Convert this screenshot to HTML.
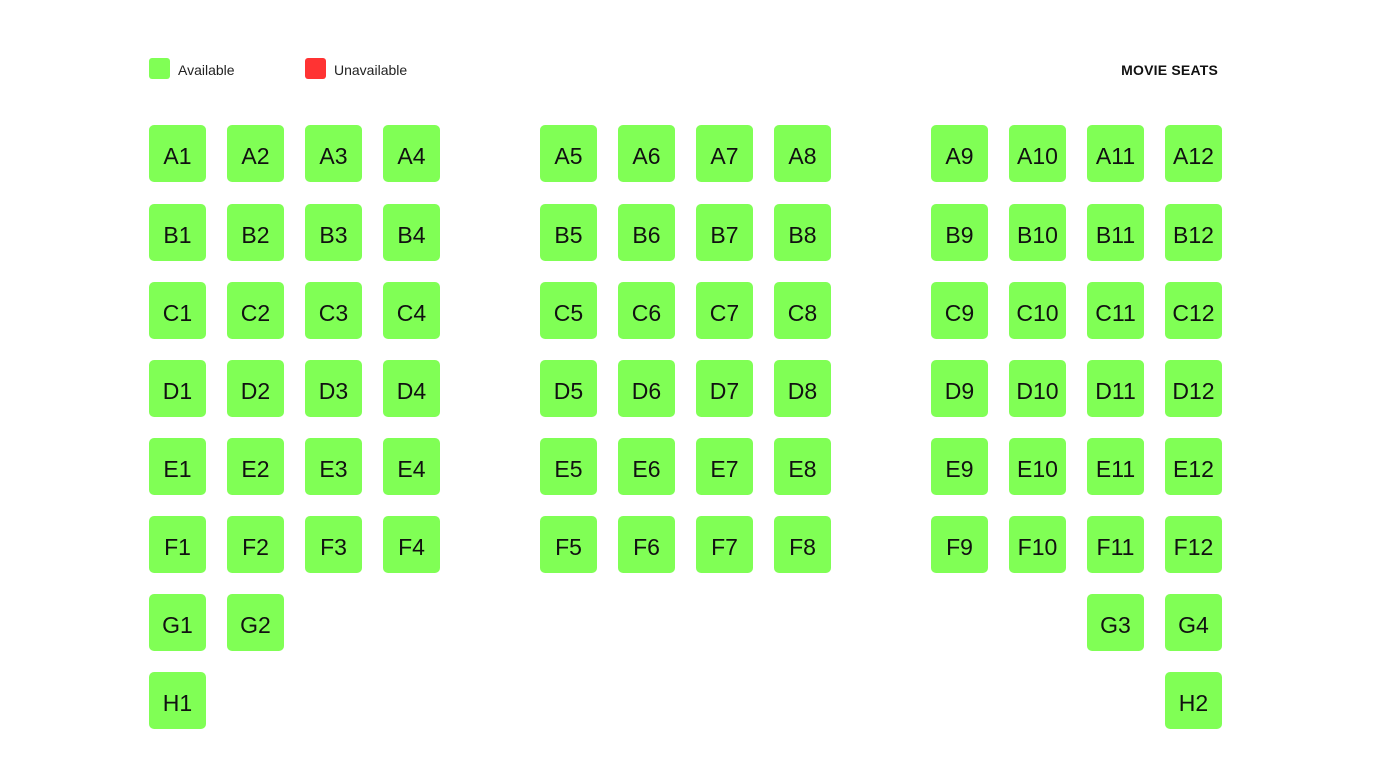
<!DOCTYPE html>
<html><head><meta charset="utf-8"><style>
html,body{margin:0;padding:0;background:#fff;width:1374px;height:783px;overflow:hidden;position:relative;font-family:"Liberation Sans",sans-serif;}
.s{position:absolute;width:57px;height:57px;box-sizing:border-box;padding-top:5px;background:#80ff55;border-radius:5px;display:flex;align-items:center;justify-content:center;font-size:23px;color:#111;}
.lg{position:absolute;top:58px;width:21px;height:21px;border-radius:3px;}
.lt{position:absolute;top:62px;font-size:14px;color:#222;}
</style></head><body>
<div class="lg" style="left:149px;background:#80ff55"></div>
<div class="lt" style="left:178px">Available</div>
<div class="lg" style="left:305px;background:#ff3333"></div>
<div class="lt" style="left:334px">Unavailable</div>
<div style="position:absolute;top:62px;right:156px;font-size:14px;letter-spacing:0.2px;font-weight:bold;color:#111">MOVIE SEATS</div>
<div id="g"></div>
<script>
var xs=[149,227,305,383,540,618,696,774,931,1009,1087,1165];
var ys=[125,204,282,360,438,516,594,672];
var rows="ABCDEF";var h="";
for(var r=0;r<6;r++)for(var c=0;c<12;c++)h+='<div class="s" style="left:'+xs[c]+'px;top:'+ys[r]+'px">'+rows[r]+(c+1)+'</div>';
var ex=[["G1",0,6],["G2",1,6],["G3",10,6],["G4",11,6],["H1",0,7],["H2",11,7]];
ex.forEach(function(e){h+='<div class="s" style="left:'+xs[e[1]]+'px;top:'+ys[e[2]]+'px">'+e[0]+'</div>';});
document.getElementById("g").innerHTML=h;
</script>
</body></html>
